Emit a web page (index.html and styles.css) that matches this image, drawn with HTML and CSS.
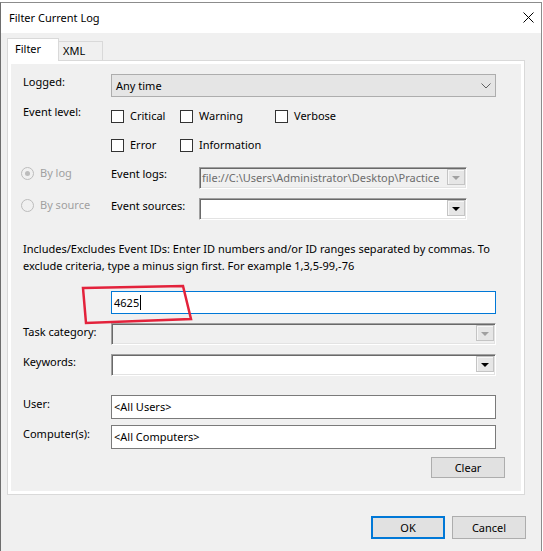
FILE: index.html
```html
<!DOCTYPE html>
<html>
<head>
<meta charset="utf-8">
<link rel="stylesheet" href="styles.css">
</head>
<body>
<div class="window">
  <div class="titlebar">
    <span class="title">Filter Current Log</span>
    <svg class="close" width="11" height="11" viewBox="0 0 11 11"><path d="M0.5 0.5 L10.5 10.5 M10.5 0.5 L0.5 10.5" stroke="#000" stroke-width="1" fill="none"/></svg>
  </div>
  <div class="client">
    <div class="tabs">
      <div class="tab active">Filter</div>
      <div class="tab">XML</div>
    </div>
    <div class="panel">
      <div class="page">
        <div class="row r-logged">
          <span class="lbl">Logged:</span>
          <div class="combo-modern"><span class="ctext">Any time</span>
            <svg class="chev" width="10" height="6" viewBox="0 0 10 6"><path d="M0.5 0.5 L5 5 L9.5 0.5" stroke="#606060" stroke-width="1" fill="none"/></svg>
          </div>
        </div>
        <div class="row r-level">
          <span class="lbl">Event level:</span>
          <div class="checks">
            <label class="chk"><span class="box"></span>Critical</label>
            <label class="chk"><span class="box"></span>Warning</label>
            <label class="chk"><span class="box"></span>Verbose</label>
            <label class="chk"><span class="box"></span>Error</label>
            <label class="chk"><span class="box"></span>Information</label>
          </div>
        </div>
        <div class="srow s1">
          <span class="radio"><span class="circle on"></span>By log</span>
          <span class="slbl">Event logs:</span>
          <div class="combo classic disabled short"><span class="ctext">file://C:\Users\Administrator\Desktop\Practice</span><span class="dbtn"><span class="tri"></span></span></div>
        </div>
        <div class="srow s2">
          <span class="radio"><span class="circle"></span>By source</span>
          <span class="slbl">Event sources:</span>
          <div class="combo classic short"><span class="ctext"></span><span class="dbtn"><span class="tri"></span></span></div>
        </div>
        <p class="desc">Includes/Excludes Event IDs: Enter ID numbers and/or ID ranges separated by commas. To<br>exclude criteria, type a minus sign first. For example 1,3,5-99,-76</p>
        <div class="row r-id">
          <span class="lbl"></span>
          <div class="input focus"><span>4625</span><span class="caret"></span></div>
        </div>
        <div class="row r-task">
          <span class="lbl">Task category:</span>
          <div class="combo classic disabled"><span class="ctext"></span><span class="dbtn"><span class="tri"></span></span></div>
        </div>
        <div class="row r-kw">
          <span class="lbl">Keywords:</span>
          <div class="combo classic"><span class="ctext"></span><span class="dbtn"><span class="tri"></span></span></div>
        </div>
        <div class="row r-user">
          <span class="lbl">User:</span>
          <div class="input">&lt;All Users&gt;</div>
        </div>
        <div class="row r-comp">
          <span class="lbl">Computer(s):</span>
          <div class="input">&lt;All Computers&gt;</div>
        </div>
        <div class="clear-row"><button class="btn">Clear</button></div>
      </div>
    </div>
    <div class="footer">
      <button class="btn default">OK</button>
      <button class="btn">Cancel</button>
    </div>
  </div>
  <svg class="annot" width="543" height="551" viewBox="0 0 543 551"><polygon points="83,288 183,286 191,319 86,323" fill="none" stroke="#e3223b" stroke-width="2.5" stroke-linejoin="miter"/></svg>
</div>
</body>
</html>
```
FILE: styles.css
```css
* { box-sizing: border-box; }
html, body { margin: 0; padding: 0; background: #ffffff; }
body {
  font-family: "Noto Sans", "Open Sans", sans-serif;
  font-size: 11px;
  line-height: 16px;
  color: #000;
  width: 543px;
  height: 551px;
  overflow: hidden;
}
.window {
  position: relative;
  margin-top: 2px;
  width: 542px;
  height: 549px;
  border-top: 1px solid #8c8c8c;
  border-left: 1px solid #6e6e6e;
  border-right: 1px solid #8c8c8c;
  background: #f0f0f0;
}
.titlebar {
  height: 30px;
  background: #ffffff;
  display: flex;
  align-items: center;
  justify-content: space-between;
  padding-left: 8px;
  padding-right: 7px;
}
.title { font-size: 11px; }
.close { display: block; margin-top: -2px; }
.client { background: #f0f0f0; }
.tabs {
  height: 27px;
  display: flex;
  align-items: flex-end;
  padding-left: 6px;
}
.tab {
  border: 1px solid #d9d9d9;
  border-bottom: none;
}
.tab.active {
  width: 52px;
  height: 23px;
  background: #ffffff;
  padding: 2px 0 0 7px;
  margin-bottom: -1px;
  position: relative;
  z-index: 1;
}
.tab:not(.active) {
  width: 44px;
  height: 19px;
  border-left: none;
  padding: 1px 0 0 4px;
  background: #f0f0f0;
}
.panel {
  margin-left: 6px;
  width: 518px;
  height: 435px;
  border: 1px solid #d9d9d9;
  background: #ffffff;
  padding: 3px;
}
.page {
  height: 427px;
  background: #f0f0f0;
  padding: 0 16px 0 12px;
  display: flex;
  flex-direction: column;
}
.row {
  display: grid;
  grid-template-columns: 88px 1fr;
  align-items: start;
  margin-right: 9px;
}
.r-logged { margin-top: 10px; }
.r-level { margin-top: 7px; }
.r-id { margin-top: 17px; }
.r-task { margin-top: 9px; }
.r-kw { margin-top: 9px; }
.r-user { margin-top: 19px; }
.r-comp { margin-top: 6px; }
.r-task .lbl, .r-user .lbl, .r-comp .lbl { padding-top: 1px; }

.combo-modern {
  height: 23px;
  background: #e5e5e5;
  border: 1px solid #adadad;
  display: flex;
  align-items: center;
  padding-left: 4px;
  padding-right: 4px;
}
.combo-modern .ctext { flex: 1; }
.chev { display: block; margin-top: 1px; }

.checks {
  display: grid;
  grid-template-columns: 69px 95px auto;
  grid-auto-rows: 16px;
  row-gap: 13px;
  padding-top: 4px;
}
.chk {
  display: flex;
  align-items: center;
  gap: 6px;
}
.box {
  width: 13px;
  height: 13px;
  border: 1px solid #333333;
  background: #ffffff;
  flex: none;
}

.srow {
  display: grid;
  grid-template-columns: 90px 88px 268px;
  align-items: start;
  margin-left: -2px;
}
.s1 { margin-top: 14px; }
.s2 { margin-top: 9px; }
.radio {
  display: flex;
  align-items: center;
  gap: 6px;
  color: #a0a0a0;
  height: 16px;
}
.s1 .radio { margin-top: -2px; }
.s2 .radio { margin-top: -1px; }
.s1 .slbl { margin-top: -1px; }
.circle {
  width: 13px;
  height: 13px;
  border-radius: 50%;
  border: 1px solid #bcbcbc;
  background: #f0f0f0;
  display: flex;
  align-items: center;
  justify-content: center;
  flex: none;
}
.circle.on::after {
  content: "";
  width: 5px;
  height: 5px;
  border-radius: 50%;
  background: #bcbcbc;
}

.combo.classic {
  height: 22px;
  background: #ffffff;
  border: 1px solid;
  border-color: #a0a0a0 #ffffff #ffffff #a0a0a0;
  box-shadow: inset 1px 1px 0 #696969, inset -1px -1px 0 #e3e3e3;
  padding: 1px;
  display: flex;
  align-items: flex-start;
  overflow: hidden;
}
.combo.classic.disabled { background: #f0f0f0; }
.combo .ctext {
  flex: 1;
  white-space: nowrap;
  overflow: hidden;
  padding-left: 1px;
  color: #6d6d6d;
  line-height: 18px;
}
.dbtn {
  width: 18px;
  height: 16px;
  flex: none;
  background: #e6e6e6;
  border: 1px solid #c4c4c4;
  box-shadow: inset 1px 1px 0 #f7f7f7;
  display: flex;
  align-items: center;
  justify-content: center;
}
.tri {
  width: 0;
  height: 0;
  border-left: 4px solid transparent;
  border-right: 4px solid transparent;
  border-top: 4px solid #000000;
  margin-top: 1px;
}
.disabled .tri { border-top-color: #a0a0a0; }

.desc {
  margin: 20px 0 0 0;
  line-height: 17px;
  white-space: nowrap;
}

.input {
  height: 24px;
  background: #ffffff;
  border: 1px solid #7a7a7a;
  padding-left: 2px;
  display: flex;
  align-items: center;
}
.r-id .input { height: 23px; }
.input.focus { border-color: #0078d7; }
.caret {
  width: 1px;
  height: 15px;
  background: #000;
  margin-left: 1px;
}

.clear-row {
  margin-top: 8px;
  display: flex;
  justify-content: flex-end;
}
.btn {
  font-family: inherit;
  font-size: 11px;
  line-height: 16px;
  color: #000;
  width: 74px;
  background: #e1e1e1;
  border: 1px solid #adadad;
  padding: 0;
  margin: 0;
}
.clear-row .btn { height: 21px; }
.footer {
  margin-top: 21px;
  display: flex;
  justify-content: flex-end;
  gap: 7px;
  padding-right: 15px;
}
.footer .btn { height: 23px; }
.btn.default { border: 2px solid #0078d7; }

.annot {
  position: absolute;
  left: -1px;
  top: -3px;
  pointer-events: none;
}
```
